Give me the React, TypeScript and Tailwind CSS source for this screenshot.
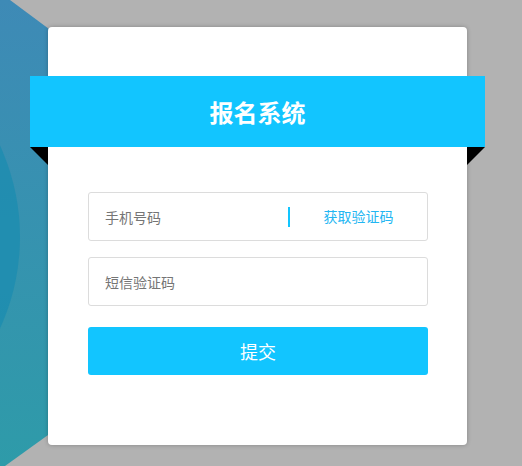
import React from "react";

export default function App() {
  return (
    <div
      className="relative w-[522px] h-[466px] overflow-hidden bg-[#b2b2b2] pt-[27px] pl-[48px]"
      style={{ fontFamily: '"Noto Sans CJK SC", "Noto Sans", sans-serif' }}
    >
      <svg
        className="absolute left-0 top-0"
        width="120"
        height="466"
        viewBox="0 0 120 466"
      >
        <defs>
          <linearGradient id="bg" x1="0" y1="0" x2="0" y2="1">
            <stop offset="0" stopColor="#3e8ab6" />
            <stop offset="1" stopColor="#2e9ba9" />
          </linearGradient>
          <clipPath id="clip">
            <polygon points="0,0 10,0 80,52 80,412 5,466 0,466" />
          </clipPath>
        </defs>
        <polygon points="0,0 10,0 80,52 80,412 5,466 0,466" fill="url(#bg)" />
        <g clipPath="url(#clip)">
          <circle cx="-199" cy="237" r="219" fill="#1b8cb0" opacity="0.75" />
        </g>
      </svg>

      <div className="relative w-[419px] h-[418px] bg-white rounded-[4px] shadow-[0_0_4px_rgba(0,0,0,0.25)] pt-[49px]">
        <div className="relative -mx-[18px] h-[71px] bg-[#12c5ff] flex items-center justify-center">
          <h1 className="text-white text-[24px] font-bold leading-none">报名系统</h1>
          <div className="absolute left-0 top-full w-0 h-0 border-t-[18px] border-t-black border-l-[18px] border-l-transparent" />
          <div className="absolute right-0 top-full w-0 h-0 border-t-[18px] border-t-black border-r-[18px] border-r-transparent" />
        </div>

        <div className="pl-[40px] pr-[39px] pt-[45px] flex flex-col">
          <div className="flex items-center h-[49px] border border-[#dcdcdc] rounded-[3px]">
            <input
              className="w-[199px] h-full pl-4 text-[14px] text-[#555] placeholder:text-[#757575] outline-none bg-transparent"
              placeholder="手机号码"
            />
            <span className="w-[2px] h-5 bg-[#12c5ff]" />
            <button className="flex-1 h-full text-[14px] text-[#22b6f2] bg-transparent">
              获取验证码
            </button>
          </div>

          <div className="mt-[16px] flex items-center h-[49px] border border-[#dcdcdc] rounded-[3px]">
            <input
              className="w-full h-full pl-4 text-[14px] text-[#555] placeholder:text-[#757575] outline-none bg-transparent"
              placeholder="短信验证码"
            />
          </div>

          <button className="mt-[21px] h-[48px] rounded-[3px] bg-[#12c5ff] text-white text-[18px]">
            提交
          </button>
        </div>
      </div>
    </div>
  );
}
